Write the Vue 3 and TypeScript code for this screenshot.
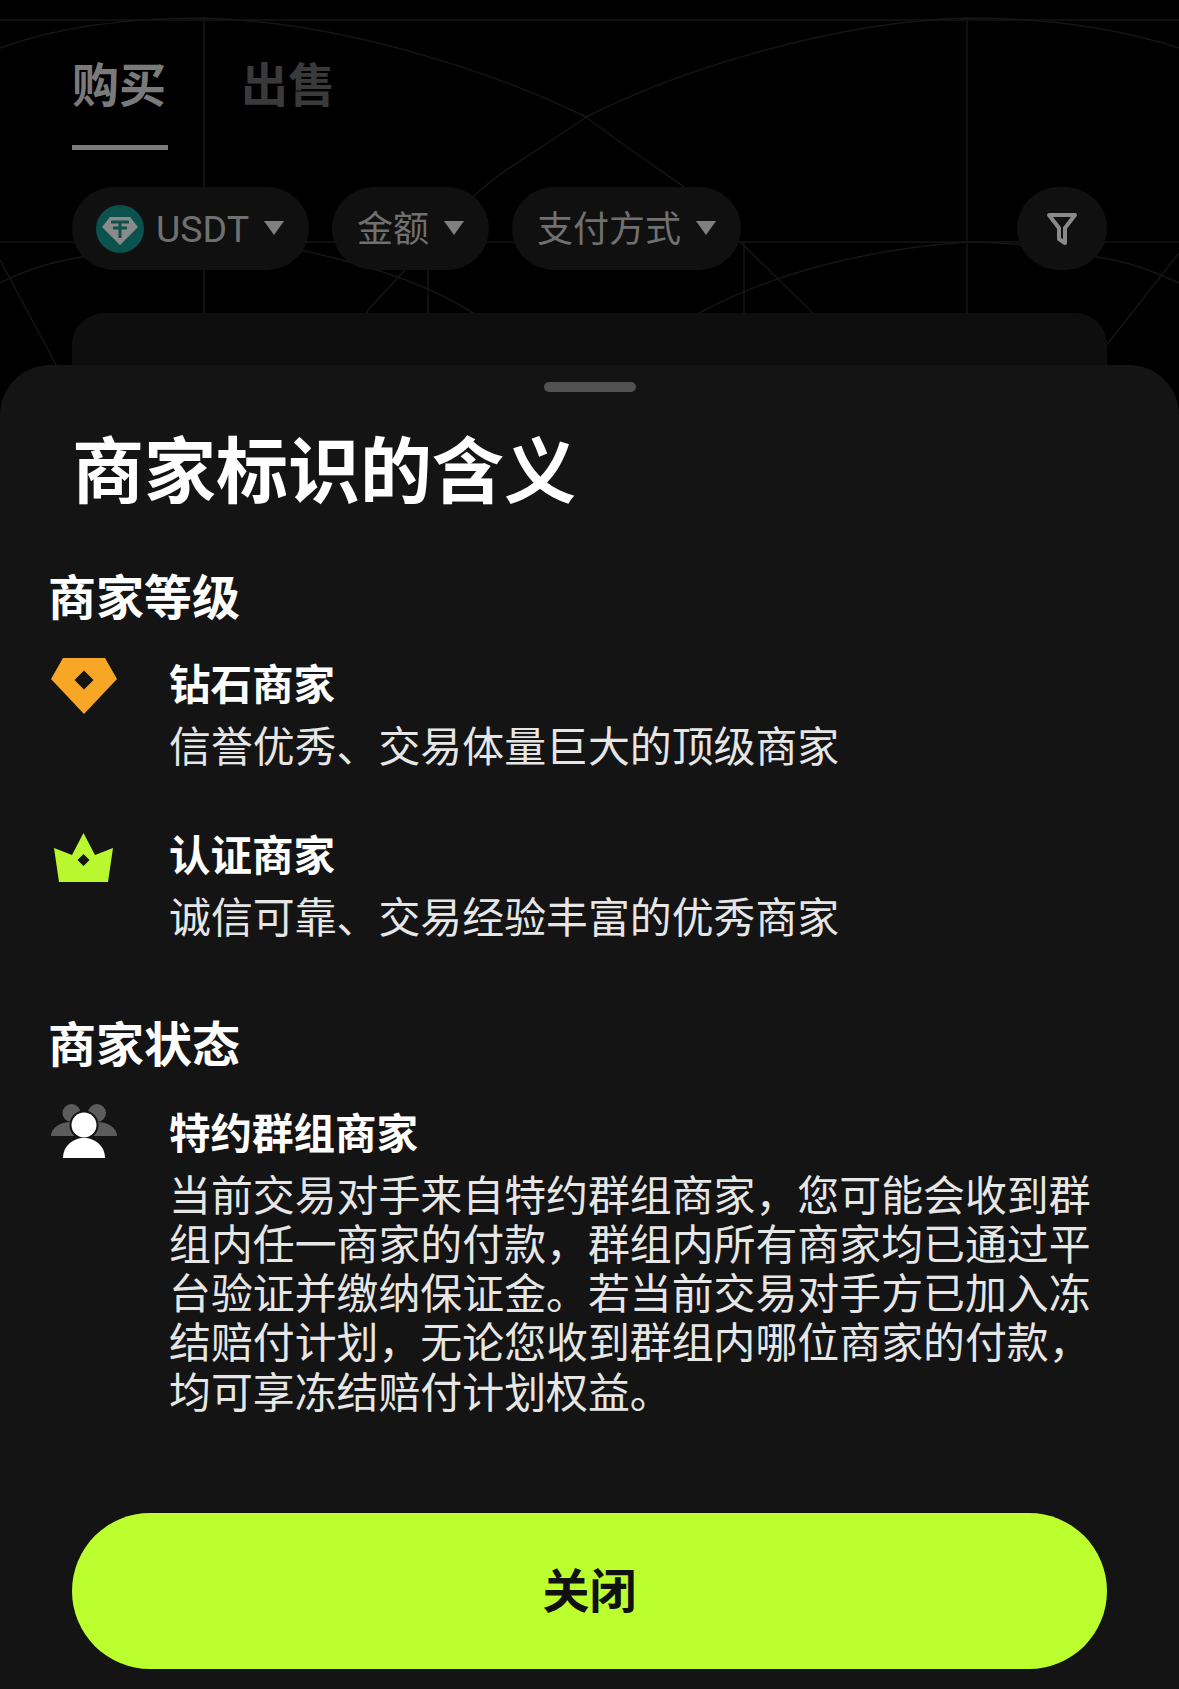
<script setup lang="ts">
type Merchant = { name: string; desc: string[] }

const filters = [
  { label: 'USDT', coin: true },
  { label: '金额', coin: false },
  { label: '支付方式', coin: false }
]

const diamond: Merchant = { name: '钻石商家', desc: ['信誉优秀、交易体量巨大的顶级商家'] }
const certified: Merchant = { name: '认证商家', desc: ['诚信可靠、交易经验丰富的优秀商家'] }
const group: Merchant = {
  name: '特约群组商家',
  desc: [
    '当前交易对手来自特约群组商家，您可能会收到群',
    '组内任一商家的付款，群组内所有商家均已通过平',
    '台验证并缴纳保证金。若当前交易对手方已加入冻',
    '结赔付计划，无论您收到群组内哪位商家的付款，',
    '均可享冻结赔付计划权益。'
  ]
}
</script>

<template>
  <div class="page">
    <!-- faint line pattern behind the dimmed page -->
    <svg class="pattern" viewBox="0 0 1179 400" aria-hidden="true">
      <g fill="none" stroke="#151515" stroke-width="1.5">
        <path d="M0 20H1179M0 242H1179M204 20V400M967 20V400M428 270V400M744 242V400" />
        <path d="M0 48C60 26 130 18 203 18C340 22 490 70 586 117C630 150 660 170 684 187L820 320" />
        <path d="M1179 48C1110 26 1040 18 967 18C830 22 680 70 586 117C540 150 500 170 473 197L368 310L330 400" />
        <path d="M0 283C25 270 50 262 82 257C150 245 230 240 300 250C370 265 430 285 473 313L510 400" />
        <path d="M1179 283C1150 270 1130 262 1097 257C1060 248 1010 242 967 242C860 250 770 275 699 313L640 400" />
        <path d="M0 260L75 400M1179 253L1105 347" />
      </g>
    </svg>

    <div class="behind">
      <div class="tabs">
        <div class="tab active">购买</div>
        <div class="tab">出售</div>
      </div>
      <div class="filters">
        <div v-for="f in filters" :key="f.label" class="pill" :class="{ 'with-coin': f.coin }">
          <svg v-if="f.coin" class="coin" viewBox="0 0 48 48" aria-hidden="true">
            <circle cx="24" cy="24" r="24" fill="#0c524c" />
            <path d="M14 12H34L42 22L24 40L6 22Z" fill="#8a8a8a" />
            <path d="M15 17H33M24 17V33M17 23H31" fill="none" stroke="#0c524c" stroke-width="3" />
          </svg>
          <span>{{ f.label }}</span>
          <i class="caret"></i>
        </div>
        <div class="pill filter-btn">
          <svg viewBox="0 0 32 34" width="32" height="34" aria-hidden="true">
            <path d="M3 3H29L19 16V31L13 27V16Z" fill="none" stroke="#8a8a8a" stroke-width="4" stroke-linejoin="round" />
          </svg>
        </div>
      </div>
      <div class="card"></div>
    </div>

    <div class="sheet">
      <div class="handle"></div>
      <h1 class="title">商家标识的含义</h1>

      <h2 class="section">商家等级</h2>
      <div class="item first">
        <svg class="icon" viewBox="0 0 66 56" aria-hidden="true">
          <path fill-rule="evenodd" d="M12 0H54L66 21L33 56L0 21ZM33 12.5L23.5 22L33 31.5L42.5 22Z" fill="#f7a625" />
        </svg>
        <div class="body">
          <div class="name">{{ diamond.name }}</div>
          <div v-for="l in diamond.desc" :key="l" class="desc">{{ l }}</div>
        </div>
      </div>
      <div class="item second">
        <svg class="icon crown" viewBox="0 0 59 49" aria-hidden="true">
          <path fill-rule="evenodd" d="M29.5 0L41 22L59 15L54 49H5L0 15L18 22ZM29.5 21L23.5 27L29.5 33L35.5 27Z" fill="#b9f82e" />
        </svg>
        <div class="body">
          <div class="name">{{ certified.name }}</div>
          <div v-for="l in certified.desc" :key="l" class="desc">{{ l }}</div>
        </div>
      </div>

      <h2 class="section status">商家状态</h2>
      <div class="item third">
        <svg class="icon people" viewBox="0 0 66 54" aria-hidden="true">
          <g class="back" fill="#5c5c5c">
            <circle cx="20.5" cy="9" r="9" />
            <path d="M0 32C0 24 9 18 20 18C31 18 36 24 36 32Z" />
            <circle cx="46" cy="9" r="9" />
            <path d="M30 32C30 24 35 18 46 18C57 18 66 24 66 32Z" />
          </g>
          <circle cx="33" cy="21" r="14.5" fill="#141414" />
          <path d="M10 54C10 42 20 32 33 32C46 32 56 42 56 54Z" fill="#141414" />
          <circle cx="33" cy="21" r="12.5" fill="#fff" />
          <path d="M12 54C12 42 22 34 33 34C44 34 54 42 54 54Z" fill="#fff" />
        </svg>
        <div class="body">
          <div class="name">{{ group.name }}</div>
          <div v-for="l in group.desc" :key="l" class="desc">{{ l }}</div>
        </div>
      </div>

      <button class="close" type="button"><span>关闭</span></button>
    </div>
  </div>
</template>

<style>
html,
body {
  margin: 0;
  background: #000;
}
</style>

<style scoped>
.page {
  position: relative;
  width: 1179px;
  height: 1689px;
  overflow: hidden;
  background: #000;
  font-family: 'Noto Sans CJK SC', 'Liberation Sans', sans-serif;
}
.pattern {
  position: absolute;
  left: 0;
  top: 0;
  width: 1179px;
  height: 400px;
}
.behind {
  position: relative;
  padding: 47px 72px 0;
}
.tabs {
  display: flex;
  gap: 73px;
}
.tab {
  font-size: 47px;
  line-height: 70px;
  height: 98px;
  font-weight: 700;
  color: #3a3a3a;
  box-sizing: content-box;
}
.tab.active {
  color: #7a7a7a;
  border-bottom: 5px solid #7a7a7a;
  width: 96px;
}
.filters {
  display: flex;
  gap: 23px;
  margin-top: 37px;
}
.pill {
  display: flex;
  align-items: center;
  gap: 15px;
  height: 83px;
  padding: 0 25px;
  border-radius: 42px;
  background: #101010;
  color: #707070;
  font-size: 36px;
  font-family: Roboto, 'Noto Sans CJK SC', sans-serif;
}
.pill span {
  margin-bottom: 6px;
}
.pill.with-coin {
  padding-left: 24px;
  font-size: 37.5px;
}
.pill.with-coin span {
  margin-bottom: 0;
}
.coin {
  width: 48px;
  height: 48px;
  margin-right: -3px;
}
.caret {
  width: 0;
  height: 0;
  margin-bottom: 2px;
  border-left: 10px solid transparent;
  border-right: 10px solid transparent;
  border-top: 14px solid #808080;
}
.filter-btn {
  margin-left: auto;
  width: 90px;
  padding: 0;
  justify-content: center;
}
.card {
  height: 120px;
  margin-top: 43px;
  border-radius: 32px;
  background: #0e0e0e;
}
.sheet {
  position: absolute;
  left: 0;
  right: 0;
  bottom: 0;
  height: 1324px;
  box-sizing: border-box;
  border-radius: 50px 50px 0 0;
  background: #141414;
  padding: 17px 48px 0;
  color: #fff;
}
.handle {
  width: 92px;
  height: 10px;
  margin: 0 auto;
  border-radius: 5px;
  background: #525252;
}
.title {
  margin: 24px 0 0 24px;
  font-size: 72px;
  line-height: 100px;
  font-weight: 700;
}
.section {
  margin: 45px 0 0;
  font-size: 48px;
  line-height: 66px;
  font-weight: 700;
}
.section.status {
  margin-top: 68px;
}
.item {
  display: flex;
  align-items: flex-start;
  margin-top: 26px;
}
.item.second {
  margin-top: 56px;
}
.item.third {
  margin-top: 28px;
}
.icon {
  flex: 0 0 auto;
  width: 66px;
  height: 56px;
  margin: 5px 52px 0 3px;
}
.icon.crown {
  width: 59px;
  height: 49px;
  margin: 9px 56px 0 6px;
}
.icon.people {
  width: 66px;
  height: 54px;
  margin: 2px 52px 0 3px;
}
.back {
  filter: blur(0.6px);
}
.body {
  flex: 1;
}
.name {
  font-size: 41.5px;
  line-height: 58px;
  font-weight: 700;
}
.desc {
  font-size: 41.9px;
  line-height: 49.25px;
  white-space: nowrap;
  color: #e6e6e6;
}
.name + .desc {
  margin-top: 8px;
}
.close {
  position: absolute;
  left: 72px;
  right: 72px;
  bottom: 20px;
  height: 156px;
  border: 0;
  border-radius: 78px;
  background: #bcff2f;
  color: #111;
  font-family: inherit;
  font-size: 47px;
  font-weight: 700;
}
.close span {
  display: block;
  margin-bottom: 8px;
}
</style>
